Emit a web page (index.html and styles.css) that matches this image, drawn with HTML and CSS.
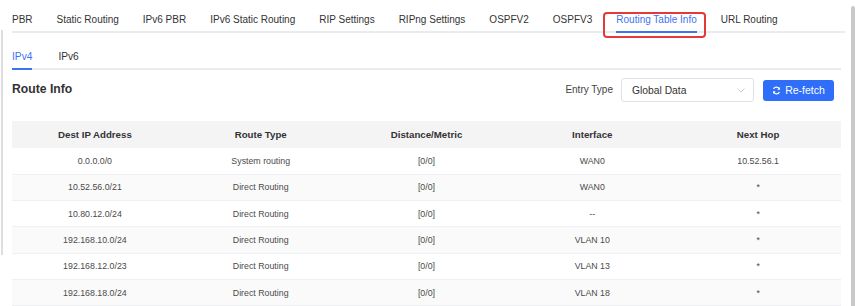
FILE: index.html
```html
<!DOCTYPE html>
<html lang="en">
<head>
<meta charset="utf-8">
<title>Routing Table Info</title>
<link rel="stylesheet" href="styles.css">
</head>
<body>
<div class="page">
  <div class="main">
    <nav class="tabs">
      <div class="tab">PBR</div>
      <div class="tab">Static Routing</div>
      <div class="tab">IPv6 PBR</div>
      <div class="tab">IPv6 Static Routing</div>
      <div class="tab">RIP Settings</div>
      <div class="tab">RIPng Settings</div>
      <div class="tab">OSPFV2</div>
      <div class="tab">OSPFV3</div>
      <div class="tab active">Routing Table Info</div>
      <div class="tab">URL Routing</div>
    </nav>
    <div class="content">
      <nav class="subtabs">
        <div class="subtab active">IPv4</div>
        <div class="subtab">IPv6</div>
      </nav>
      <div class="toolbar">
        <h2 class="title">Route Info</h2>
        <div class="controls">
          <span class="label">Entry Type</span>
          <div class="select">
            <span>Global Data</span>
            <svg class="chev" width="8" height="5" viewBox="0 0 8 5"><path d="M0.5 0.5 L4 4 L7.5 0.5" fill="none" stroke="#c4c7cf" stroke-width="0.9"/></svg>
          </div>
          <button class="btn">
            <svg class="ref" width="9" height="9" viewBox="0 0 10 10"><path d="M8.3 3.6 A3.6 3.6 0 0 0 1.7 3.2" fill="none" stroke="#fff" stroke-width="1.3"/><path d="M1.7 6.4 A3.6 3.6 0 0 0 8.3 6.8" fill="none" stroke="#fff" stroke-width="1.3"/><path d="M8.9 1.2 L8.9 4.2 L5.9 4.2 Z" fill="#fff"/><path d="M1.1 8.8 L1.1 5.8 L4.1 5.8 Z" fill="#fff"/></svg>
            <span>Re-fetch</span>
          </button>
        </div>
      </div>
      <table class="grid">
        <thead>
          <tr><th>Dest IP Address</th><th>Route Type</th><th>Distance/Metric</th><th>Interface</th><th>Next Hop</th></tr>
        </thead>
        <tbody>
          <tr><td>0.0.0.0/0</td><td>System routing</td><td>[0/0]</td><td>WAN0</td><td>10.52.56.1</td></tr>
          <tr><td>10.52.56.0/21</td><td>Direct Routing</td><td>[0/0]</td><td>WAN0</td><td>*</td></tr>
          <tr><td>10.80.12.0/24</td><td>Direct Routing</td><td>[0/0]</td><td>--</td><td>*</td></tr>
          <tr><td>192.168.10.0/24</td><td>Direct Routing</td><td>[0/0]</td><td>VLAN 10</td><td>*</td></tr>
          <tr><td>192.168.12.0/23</td><td>Direct Routing</td><td>[0/0]</td><td>VLAN 13</td><td>*</td></tr>
          <tr><td>192.168.18.0/24</td><td>Direct Routing</td><td>[0/0]</td><td>VLAN 18</td><td>*</td></tr>
        </tbody>
      </table>
    </div>
  </div>
  <div class="scrollbar"><div class="thumb"></div></div>
</div>
</body>
</html>
```

FILE: styles.css
```css
* { box-sizing: border-box; }
html, body { margin: 0; padding: 0; background: #fff; }
body {
  font-family: "Liberation Sans", Arial, sans-serif;
  color: #333;
  width: 863px;
  height: 306px;
  overflow: hidden;
}
.page {
  display: flex;
  height: 306px;
  position: relative;
}
.page::before {
  content: "";
  position: absolute;
  left: 1px;
  top: 30px;
  height: 225px;
  width: 2px;
  background: #dedede;
}
.main {
  width: 845px;
  padding-left: 12px;
}
.tabs {
  display: flex;
  gap: 24px;
  height: 33px;
  box-shadow: inset 0 -2px 0 #e8ebf0;
}
.tab {
  height: 33px;
  padding-top: 13px;
  font-size: 10px;
  line-height: 14px;
  white-space: nowrap;
  border-bottom: 2px solid transparent;
  position: relative;
}
.tab.active {
  color: #3f72f3;
  border-bottom-color: #3f72f3;
}
.tab.active::after {
  content: "";
  position: absolute;
  left: -13px;
  right: -9px;
  top: 12px;
  bottom: -7px;
  border: 2px solid #e5383b;
  border-radius: 4px;
}
.content {
  width: 829px;
}
.subtabs {
  display: flex;
  gap: 26px;
  height: 37px;
  box-shadow: inset 0 -2px 0 #e8ebf0;
}
.subtab {
  height: 37px;
  padding-top: 17px;
  font-size: 10.2px;
  line-height: 14px;
  border-bottom: 2px solid transparent;
}
.subtab.active {
  color: #3f72f3;
  border-bottom-color: #3f72f3;
}
.toolbar {
  display: flex;
  align-items: center;
  justify-content: space-between;
  height: 24px;
  margin-top: 8px;
  margin-bottom: 19px;
}
.title {
  margin: 0;
  font-size: 12.2px;
  font-weight: bold;
  color: #333;
  line-height: 14px;
  margin-top: -2px;
}
.controls {
  display: flex;
  align-items: center;
  padding-right: 7px;
}
.label {
  font-size: 10px;
  color: #444;
  margin-right: 8px;
  margin-top: -2px;
}
.select {
  width: 133px;
  height: 24px;
  border: 1px solid #dfe2e8;
  border-radius: 3px;
  display: flex;
  align-items: center;
  justify-content: space-between;
  padding: 1px 8px 0 10px;
  font-size: 10.3px;
  color: #333;
}
.chev { margin-top: -1px; }
.btn {
  margin-left: 9px;
  width: 71px;
  height: 21px;
  border: none;
  border-radius: 3px;
  background: #2f6ef8;
  color: #fff;
  font-family: inherit;
  font-size: 10.5px;
  display: flex;
  align-items: center;
  justify-content: center;
  gap: 4px;
  padding: 0;
}
.grid {
  width: 829px;
  border-collapse: collapse;
  table-layout: fixed;
}
.grid th {
  background: #f4f4f5;
  height: 27px;
  font-size: 9.7px;
  font-weight: bold;
  color: #333;
  text-align: center;
  padding: 0;
}
.grid td {
  height: 26.3px;
  font-size: 8.8px;
  color: #4a4a4a;
  text-align: center;
  padding: 0;
  border-bottom: 1px solid #eef0f3;
}
.grid tbody tr:nth-child(even) td { background: #fafafa; }
.scrollbar {
  width: 18px;
  padding-left: 6px;
  padding-top: 6px;
}
.thumb {
  width: 4px;
  height: 300px;
  background: #c9c9c9;
  border-radius: 2px 2px 0 0;
}
```
